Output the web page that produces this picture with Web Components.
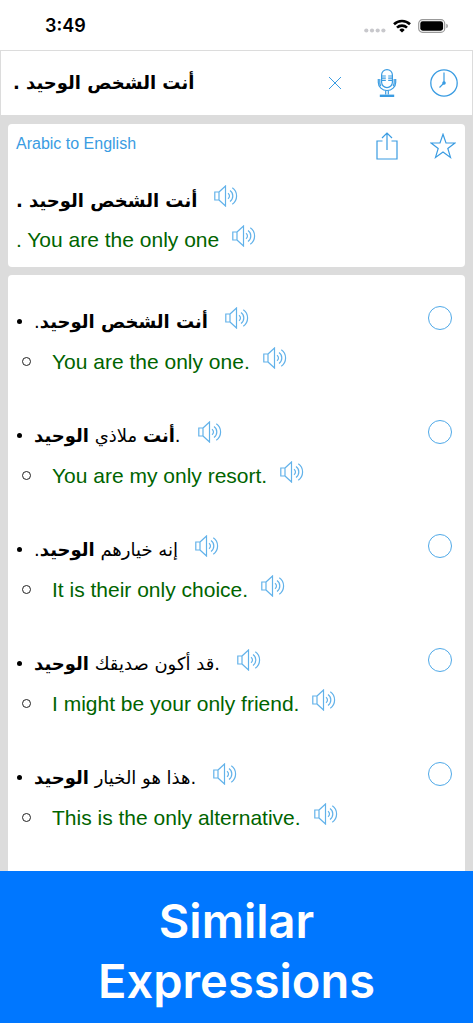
<!DOCTYPE html>
<html lang="en">
<head>
<meta charset="utf-8">
<meta name="viewport" content="width=device-width, initial-scale=1">
<title>Similar Expressions</title>
<style>
  body { margin: 0; background: #fff; color: #000; font-family: "Liberation Sans", "DejaVu Sans", sans-serif; font-size: 21px; }
</style>
</head>
<body>
<translator-app></translator-app>

<template id="t-app">
  <style>
    :host { display: flex; flex-direction: column; min-height: 100vh; box-sizing: border-box; padding-bottom: 1px; }
    main { flex: 1; display: flex; flex-direction: column; gap: 8px; padding: 8px 8px 0; background: #dcdcdc; }
    .list { flex: 1; background: #fff; border-radius: 4px 4px 0 0; padding-top: 23px; }
  </style>
  <status-bar></status-bar>
  <search-bar></search-bar>
  <main>
    <translation-card></translation-card>
    <section class="list" role="list" aria-label="Similar expressions">
      <phrase-item dir-ar="rtl"><span slot="ar"><b>أنت الشخص الوحيد</b>.</span><span slot="en">You are the only one.</span></phrase-item>
      <phrase-item dir-ar="ltr"><span slot="ar"><b>أنت</b> ملاذي <b>الوحيد</b>.</span><span slot="en">You are my only resort.</span></phrase-item>
      <phrase-item dir-ar="rtl"><span slot="ar">إنه خيارهم <b>الوحيد</b>.</span><span slot="en">It is their only choice.</span></phrase-item>
      <phrase-item dir-ar="ltr"><span slot="ar">قد أكون صديقك <b>الوحيد</b>.</span><span slot="en">I might be your only friend.</span></phrase-item>
      <phrase-item dir-ar="ltr"><span slot="ar">هذا هو الخيار <b>الوحيد</b>.</span><span slot="en">This is the only alternative.</span></phrase-item>
    </section>
  </main>
  <caption-banner>Similar Expressions</caption-banner>
</template>

<template id="t-status">
  <style>
    :host { display: flex; align-items: center; justify-content: space-between; height: 50px; padding: 0 24px 0 45px; }
    time { font: 600 18px/22px Inter, sans-serif; padding-top: 2px; }
    .sys { display: flex; align-items: center; gap: 7px; padding-top: 2px; }
    svg { display: block; }
  </style>
  <time>3:49</time>
  <div class="sys">
    <svg width="22" height="16" viewBox="0 0 22 16" fill="#c8c8cc" aria-hidden="true"><circle cx="2.3" cy="12.5" r="2.1"/><circle cx="8" cy="12.5" r="2.1"/><circle cx="13.7" cy="12.5" r="2.1"/><circle cx="19.4" cy="12.5" r="2.1"/></svg>
    <svg width="18" height="14" viewBox="0 0 18 14" fill="none" stroke="#000" stroke-width="2.6" aria-hidden="true"><path d="M1 5.2a11.5 11.5 0 0 1 16 0M4 8.6a7.2 7.2 0 0 1 10 0"/><path d="M9 13.6 6.3 10.9a3.9 3.9 0 0 1 5.4 0z" fill="#000" stroke="none"/></svg>
    <svg width="31" height="14" viewBox="0 0 31 14" aria-hidden="true"><rect x=".7" y=".7" width="26" height="12.6" rx="3.8" fill="none" stroke="#999" stroke-width="1.2"/><rect x="2.3" y="2.3" width="22.8" height="9.4" rx="2.4"/><path d="M28.3 4.8v4.4q1.6-.5 1.6-2.2t-1.6-2.2z" fill="#999"/></svg>
  </div>
</template>

<template id="t-search">
  <style>
    :host { display: flex; align-items: center; box-sizing: border-box; height: 66px; padding: 0 14px 0 12px; border: 1px solid #dcdcdc; background: #fff; }
    input { flex: 1; min-width: 0; border: 0; padding: 0; outline: 0; background: none; color: #000; font: bold 18px/32px "DejaVu Sans", sans-serif; text-align: left; }
    button { flex: none; display: grid; place-items: center; border: 0; padding: 0; background: none; height: 40px; color: #3a9ce2; }
    .clear { width: 40px; }
    .mic { width: 40px; margin: 0 23px 0 12px; }
    .clock { width: 28px; }
    svg { display: block; fill: none; stroke: currentColor; stroke-width: 1.2; }
    .clear svg { stroke-width: 1; }
  </style>
  <input type="text" dir="rtl" aria-label="Text to translate" value="أنت الشخص الوحيد .">
  <button class="clear" aria-label="Clear"><svg width="14" height="14" viewBox="0 0 14 14"><path d="M1 1 13 13M13 1 1 13"/></svg></button>
  <button class="mic" aria-label="Voice input"><svg width="20" height="30" viewBox="0 0 20 30"><rect x="4.6" y="1.6" width="10.8" height="18" rx="5.4"/><path d="M1.3 11v3.5a8.7 8 0 0 0 17.4 0V11M2.8 11v3.2a7.2 7 0 0 0 1 3.8M17.2 11v3.2a7.2 7 0 0 1-1 3.8"/><path d="M4.6 8h4.2M4.6 10.2h4.2M4.6 12.4h4.2M11.2 8h4.2M11.2 10.2h4.2M11.2 12.4h4.2M8.7 22.6v4M11.3 22.6v4"/><path d="M2.8 27.8h14.4" stroke-width="2.4"/></svg></button>
  <button class="clock" aria-label="History"><svg width="28" height="28" viewBox="0 0 28 28"><circle cx="14" cy="14" r="13.2" stroke-width="1.3"/><path d="M14 3.5V14l-4.5 4.5"/><circle cx="14" cy="14" r="1.2" fill="currentColor"/></svg></button>
</template>

<template id="t-card">
  <style>
    :host { display: block; background: #fff; border-radius: 4px; padding: 0 8px 11px; }
    header { display: flex; align-items: center; height: 44px; margin-bottom: 8px; padding-right: 1px; color: #3a9ce2; }
    a { flex: 1; color: inherit; text-decoration: none; font-size: 16px; line-height: 20px; padding-bottom: 4px; }
    button { flex: none; border: 0; padding: 0; background: none; color: inherit; }
    .share { margin-right: 32px; }
    svg { display: block; fill: none; stroke: currentColor; stroke-width: 1.2; }
    .ar { --gap: 17px; }
    .en { color: #006400; }
    b { font-family: "DejaVu Sans", sans-serif; font-size: 18px; }
  </style>
  <header>
    <a href="#languages">Arabic to English</a>
    <button class="share" aria-label="Share"><svg width="22" height="28" viewBox="0 0 22 28"><path d="M6.5 9H1v18h20V9h-5.5M11 18V1M6 6l5-5 5 5"/></svg></button>
    <button aria-label="Add to favourites"><svg width="26" height="26" viewBox="0 0 26 26"><path d="M13 1.3 16 10h8.9l-7.1 5.4 2.7 9-7.5-5.5-7.5 5.5 2.7-9L1.1 10H10z"/></svg></button>
  </header>
  <spoken-text class="ar"><b dir="rtl">أنت الشخص الوحيد .</b></spoken-text>
  <spoken-text class="en">. You are the only one</spoken-text>
</template>

<template id="t-spoken">
  <style>
    :host { display: flex; align-items: center; height: 40px; gap: var(--gap, 13px); }
    .text { line-height: 24px; padding-top: 8px; white-space: nowrap; }
    button { flex: none; border: 0; padding: 0; background: none; color: #62b2ea; }
    svg { display: block; fill: none; stroke: currentColor; stroke-width: 1.2; }
  </style>
  <span class="text"><slot></slot></span>
  <button aria-label="Listen"><svg width="24" height="22" viewBox="0 0 24 22"><path d="M.8 7h4.2v8H.8zM5 7l6.5-6v20L5 15M14 8.2a3.4 3.4 0 0 1 0 5.6M16 5.6a6.6 6.6 0 0 1 0 10.800M18.300 2.800a10 10 0 0 1 0 16.400"/></svg></button>
</template>

<template id="t-phrase">
  <style>
    :host { display: grid; grid-template-columns: 26px 1fr 24px; padding: 0 13px 34px 0; }
    .row2 { grid-column: 1 / -1; display: grid; grid-template-columns: 44px 1fr; color: #006400; }
    .dot { width: 5px; height: 5px; border-radius: 50%; background: #000; margin: 21px 0 0 9px; }
    .ring { box-sizing: border-box; width: 9px; height: 9px; border: 1px solid #222; border-radius: 50%; margin: 19px 0 0 14px; }
    input { appearance: none; box-sizing: border-box; width: 24px; height: 24px; margin: 8px 0 0; border: 1px solid #4fa9e8; border-radius: 50%; }
    input:checked { background: #4fa9e8; }
    .ar { --gap: 17px; }
    .ar span { font-family: "DejaVu Sans", sans-serif; font-size: 18px; }
  </style>
  <i class="dot"></i>
  <spoken-text class="ar"><span><slot name="ar"></slot></span></spoken-text>
  <input type="checkbox" aria-label="Select phrase">
  <div class="row2"><i class="ring"></i><spoken-text><slot name="en"></slot></spoken-text></div>
</template>

<template id="t-banner">
  <style>
    :host { display: block; background: #0077ff; color: #fff; padding: 20px 80px 12px; text-align: center; }
    h1 { margin: 0; font: 600 47px/60px Inter, sans-serif; }
  </style>
  <h1><slot></slot></h1>
</template>

<script>
  function define(name, templateId, setup) {
    customElements.define(name, class extends HTMLElement {
      connectedCallback() {
        if (this.shadowRoot) return;
        const root = this.attachShadow({ mode: "open" });
        root.append(document.getElementById(templateId).content.cloneNode(true));
        if (setup) setup(this, root);
      }
    });
  }
  define("spoken-text", "t-spoken");
  define("phrase-item", "t-phrase", (host) => {
    host.setAttribute("role", "listitem");
    const text = host.querySelector("[slot=ar]");
    text.dir = host.getAttribute("dir-ar");
    text.lang = "ar";
    text.style.display = "block";
  });
  define("status-bar", "t-status");
  define("search-bar", "t-search");
  define("translation-card", "t-card");
  define("caption-banner", "t-banner");
  define("translator-app", "t-app");
</script>
</body>
</html>
